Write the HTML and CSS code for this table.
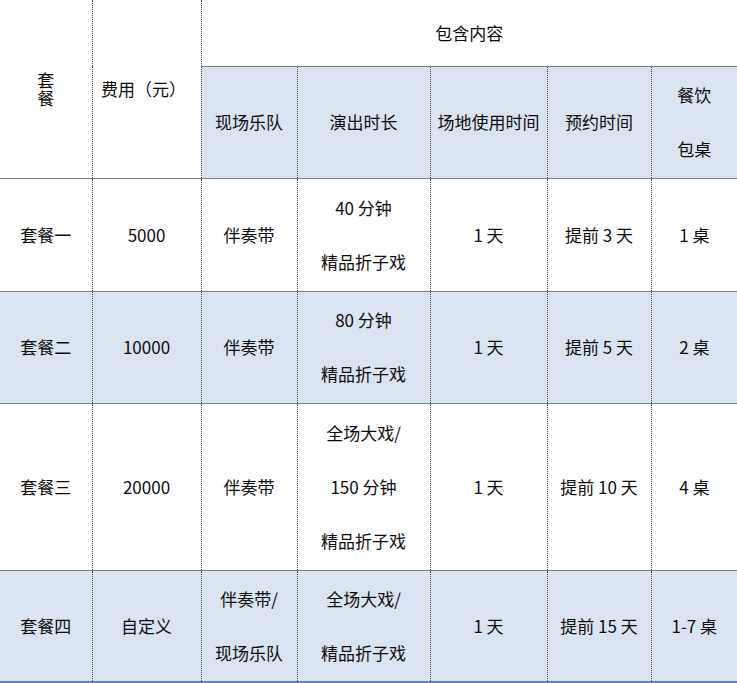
FILE: index.html
```html
<!DOCTYPE html>
<html lang="zh-CN">
<head>
<meta charset="utf-8">
<title>套餐</title>
<link rel="stylesheet" href="styles.css">
</head>
<body>
<table class="plan">
  <colgroup>
    <col class="c1"><col class="c2"><col class="c3"><col class="c4"><col class="c5"><col class="c6"><col class="c7">
  </colgroup>
  <tr class="h1">
    <td rowspan="2" class="tight">套<br>餐</td>
    <td rowspan="2" class="fee">费用（元）</td>
    <td colspan="5" class="group">包含内容</td>
  </tr>
  <tr class="h2 blue">
    <td>现场乐队</td>
    <td>演出时长</td>
    <td>场地使用时间</td>
    <td>预约时间</td>
    <td class="multi">餐饮<br>包桌</td>
  </tr>
  <tr class="r1">
    <td>套餐一</td>
    <td>5000</td>
    <td>伴奏带</td>
    <td class="multi">40 分钟<br>精品折子戏</td>
    <td>1 天</td>
    <td>提前 3 天</td>
    <td>1 桌</td>
  </tr>
  <tr class="r2 blue">
    <td>套餐二</td>
    <td>10000</td>
    <td>伴奏带</td>
    <td class="multi">80 分钟<br>精品折子戏</td>
    <td>1 天</td>
    <td>提前 5 天</td>
    <td>2 桌</td>
  </tr>
  <tr class="r3">
    <td>套餐三</td>
    <td>20000</td>
    <td>伴奏带</td>
    <td class="multi">全场大戏/<br>150 分钟<br>精品折子戏</td>
    <td>1 天</td>
    <td>提前 10 天</td>
    <td>4 桌</td>
  </tr>
  <tr class="r4 blue last">
    <td>套餐四</td>
    <td>自定义</td>
    <td class="multi">伴奏带/<br>现场乐队</td>
    <td class="multi">全场大戏/<br>精品折子戏</td>
    <td>1 天</td>
    <td>提前 15 天</td>
    <td>1-7 桌</td>
  </tr>
</table>
</body>
</html>
```

FILE: styles.css
```css
html, body {
  margin: 0;
  padding: 0;
  background: #ffffff;
}
body {
  font-family: "Noto Sans CJK SC", "Liberation Sans", sans-serif;
  font-size: 17px;
  color: #0d0d0d;
  width: 737px;
  height: 683px;
  overflow: hidden;
}
.plan {
  border-collapse: collapse;
  table-layout: fixed;
  width: 737px;
}
.c1 { width: 92px; }
.c2 { width: 109px; }
.c3 { width: 96px; }
.c4 { width: 133px; }
.c5 { width: 117px; }
.c6 { width: 104px; }
.c7 { width: 86px; }
.plan td {
  padding: 0;
  text-align: center;
  vertical-align: middle;
  line-height: 20px;
  border-left: 1px dotted #444a55;
  border-right: 1px dotted #444a55;
  border-top: 1px solid #7a808c;
  border-bottom: 1px solid #7a808c;
}
.plan tr td:first-child {
  border-left: none;
}
.plan tr td:last-child {
  border-right: none;
}
.plan .h1 td {
  border-top: none;
}
.plan .h1 td.group {
  border-right: none;
}
.h1 { height: 66px; }
.h2 { height: 112px; }
.r1 { height: 113px; }
.r2 { height: 112px; }
.r3 { height: 167px; }
.r4 { height: 112px; }
.blue td {
  background: #dae3f0;
}
.plan .h1 td {
  background: #ffffff;
}
.plan td.multi {
  line-height: 54px;
}
.plan td.tight {
  line-height: 18px;
}
.plan td.fee {
  text-spacing-trim: space-all;
  padding-right: 6px;
}
.plan .last td {
  border-bottom: 2px solid #5b87c7;
}
```
